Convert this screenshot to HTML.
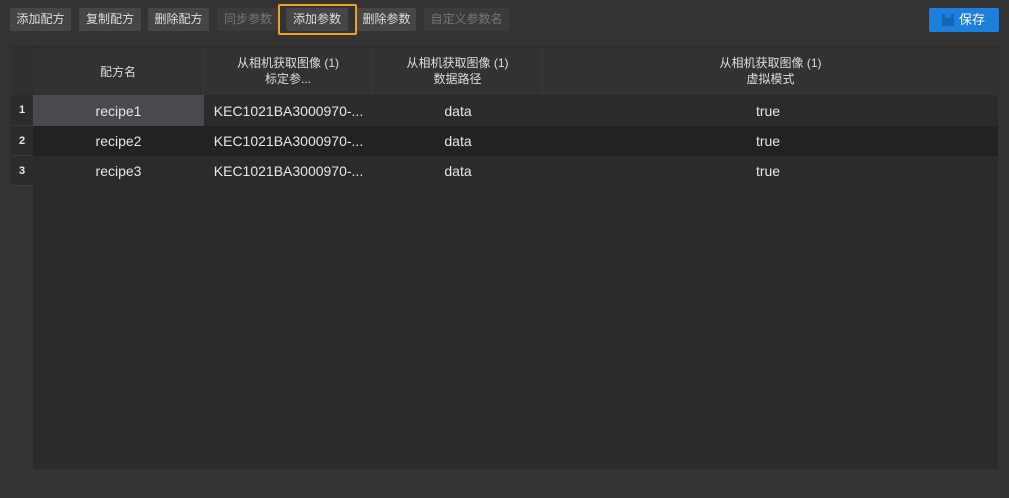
<!DOCTYPE html>
<html><head><meta charset="utf-8"><style>
*{margin:0;padding:0;box-sizing:border-box}
body{width:1009px;height:498px;background:#333;font-family:"Liberation Sans","Noto Sans CJK SC",sans-serif;position:relative;overflow:hidden;color:#e6e6e6}
.b{position:absolute;top:8px;height:23px;background:#464646;border-radius:2px;font-size:12px;line-height:23px;text-align:center;color:#ddd}
.b.d{background:#3b3b3b;color:#777}
.sel{position:absolute;left:278px;top:4px;width:79px;height:31px;border:2px solid #f0a020;border-radius:2px}
.save{position:absolute;left:929px;top:8px;width:70px;height:24px;background:#1c7fdc;border-radius:2px;color:#fff;font-size:13px;line-height:24px;padding-left:30px}
.tbl{position:absolute;left:11px;top:46px;width:987px;height:423px;background:#2b2b2b;border-top:1px solid #2a2a2a}
.c{position:absolute;text-align:center;font-size:14px}
.h{position:absolute;top:1px;height:47px;background:#323232;border-right:1px solid #3c3c3c;font-size:12px;line-height:16px;text-align:center;padding-top:7px;color:#ddd}
.rh{position:absolute;left:0;width:22px;background:#2c2c2c;border-bottom:1px solid #3a3a3a;font-size:11px;font-weight:bold;text-align:center}
</style></head><body>
<div class="b" style="left:10px;width:61px">添加配方</div>
<div class="b" style="left:79px;width:62px">复制配方</div>
<div class="b" style="left:148px;width:61px">删除配方</div>
<div class="b d" style="left:217px;width:62px">同步参数</div>
<div class="b" style="left:286px;width:62px">添加参数</div>
<div class="sel"></div>
<div class="b" style="left:357px;width:59px">删除参数</div>
<div class="b d" style="left:424px;width:85px">自定义参数名</div>
<div class="save"><svg style="position:absolute;left:13px;top:6px" width="12" height="12"><rect x="0" y="0" width="12" height="12" fill="#1565b0"/><rect x="3" y="0" width="6" height="4" fill="#1c7fdc"/></svg>保存</div>
<div class="tbl">
<div style="position:absolute;left:0;top:0;width:22px;height:48px;background:#303030"></div>
<div class="h" style="left:22px;width:171px;padding-top:16px">配方名</div>
<div class="h" style="left:193px;width:169px">从相机获取图像 (1)<br>标定参...</div>
<div class="h" style="left:362px;width:170px">从相机获取图像 (1)<br>数据路径</div>
<div class="h" style="left:532px;width:455px;border-right:none">从相机获取图像 (1)<br>虚拟模式</div>
<div style="position:absolute;left:22px;top:48px;width:965px;height:31px;background:#2b2b2b"></div>
<div style="position:absolute;left:22px;top:79px;width:965px;height:30px;background:#222"></div>
<div style="position:absolute;left:22px;top:109px;width:965px;height:30px;background:#2b2b2b"></div>
<div style="position:absolute;left:22px;top:48px;width:171px;height:31px;background:#4a4a4e"></div>
<div class="rh" style="top:48px;height:31px;line-height:31px">1</div>
<div class="rh" style="top:79px;height:30px;line-height:30px">2</div>
<div class="rh" style="top:109px;height:30px;line-height:30px">3</div>
<div class="c" style="left:22px;width:171px;top:56px">recipe1</div>
<div class="c" style="left:22px;width:171px;top:86px">recipe2</div>
<div class="c" style="left:22px;width:171px;top:116px">recipe3</div>
<div class="c" style="left:193px;width:169px;top:56px">KEC1021BA3000970-...</div>
<div class="c" style="left:193px;width:169px;top:86px">KEC1021BA3000970-...</div>
<div class="c" style="left:193px;width:169px;top:116px">KEC1021BA3000970-...</div>
<div class="c" style="left:362px;width:170px;top:56px">data</div>
<div class="c" style="left:362px;width:170px;top:86px">data</div>
<div class="c" style="left:362px;width:170px;top:116px">data</div>
<div class="c" style="left:532px;width:450px;top:56px">true</div>
<div class="c" style="left:532px;width:450px;top:86px">true</div>
<div class="c" style="left:532px;width:450px;top:116px">true</div>
<div style="position:absolute;left:0;top:139px;width:22px;height:284px;background:#333"></div>
</div>
</body></html>
